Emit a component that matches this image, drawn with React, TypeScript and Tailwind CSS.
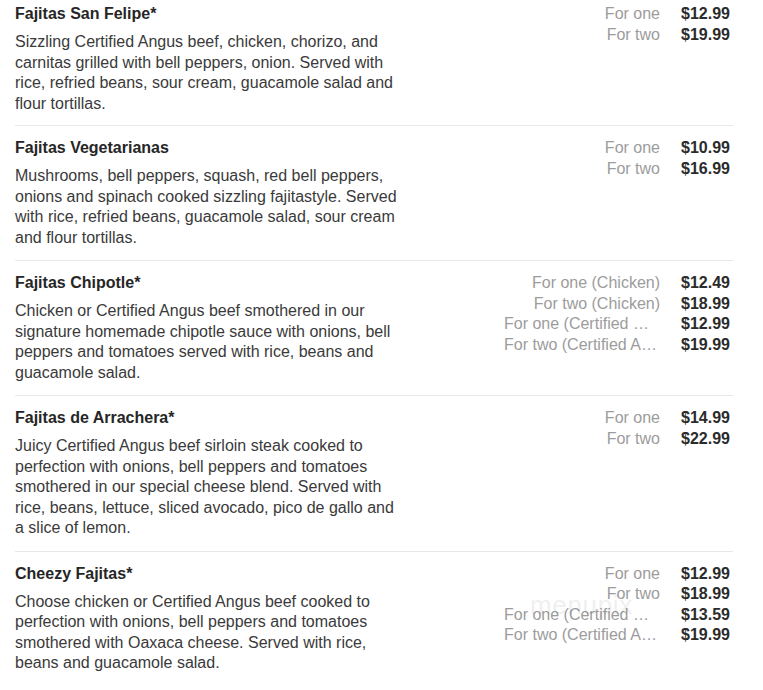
const items = [
  {
    name: "Fajitas San Felipe*",
    desc: "Sizzling Certified Angus beef, chicken, chorizo, and carnitas grilled with bell peppers, onion. Served with rice, refried beans, sour cream, guacamole salad and flour tortillas.",
    prices: [
      ["For one", "$12.99"],
      ["For two", "$19.99"],
    ],
  },
  {
    name: "Fajitas Vegetarianas",
    desc: "Mushrooms, bell peppers, squash, red bell peppers, onions and spinach cooked sizzling fajitastyle. Served with rice, refried beans, guacamole salad, sour cream and flour tortillas.",
    prices: [
      ["For one", "$10.99"],
      ["For two", "$16.99"],
    ],
  },
  {
    name: "Fajitas Chipotle*",
    desc: "Chicken or Certified Angus beef smothered in our signature homemade chipotle sauce with onions, bell peppers and tomatoes served with rice, beans and guacamole salad.",
    prices: [
      ["For one (Chicken)", "$12.49"],
      ["For two (Chicken)", "$18.99"],
      ["For one (Certified …", "$12.99"],
      ["For two (Certified A…", "$19.99"],
    ],
  },
  {
    name: "Fajitas de Arrachera*",
    desc: "Juicy Certified Angus beef sirloin steak cooked to perfection with onions, bell peppers and tomatoes smothered in our special cheese blend. Served with rice, beans, lettuce, sliced avocado, pico de gallo and a slice of lemon.",
    prices: [
      ["For one", "$14.99"],
      ["For two", "$22.99"],
    ],
  },
  {
    name: "Cheezy Fajitas*",
    desc: "Choose chicken or Certified Angus beef cooked to perfection with onions, bell peppers and tomatoes smothered with Oaxaca cheese. Served with rice, beans and guacamole salad.",
    prices: [
      ["For one", "$12.99"],
      ["For two", "$18.99"],
      ["For one (Certified …", "$13.59"],
      ["For two (Certified A…", "$19.99"],
    ],
  },
];

export default function App() {
  return (
    <div className="w-[763px] h-[690px] overflow-hidden bg-white pl-[15px] pr-[30px] font-['Liberation_Sans',Arial,sans-serif] text-[16px]">
      {items.map((item, i) => (
        <div
          key={item.name}
          className={`relative flex justify-between ${
            i === 0 ? "pt-[4px] pb-[11px]" : "pt-[12px] pb-[12px] border-t border-[#e8e8e8]"
          }`}
        >
          <div className="w-[385px]">
            <h3 className="font-bold text-[#262626] leading-[20px]">{item.name}</h3>
            <p className="mt-[8px] text-[#3a3a3a] leading-[20.5px]">{item.desc}</p>
          </div>

          <div className="flex flex-col">
            {item.prices.map(([label, price]) => (
              <div key={label} className="flex items-baseline gap-[21px] leading-[20.5px]">
                <span
                  className={`w-[156px] whitespace-nowrap text-[#9c9c9c] ${
                    label.endsWith("…") ? "text-left" : "text-right"
                  }`}
                >
                  {label}
                </span>
                <span className="w-[52px] font-bold text-[#2b2b2b]">{price}</span>
              </div>
            ))}
          </div>

          {/* faint site watermark */}
          {i === 4 && (
            <span className="absolute left-[515px] top-[34px] text-[26px] tracking-wide text-[#000] opacity-[0.06] pointer-events-none">
              menupix
            </span>
          )}
        </div>
      ))}
    </div>
  );
}
